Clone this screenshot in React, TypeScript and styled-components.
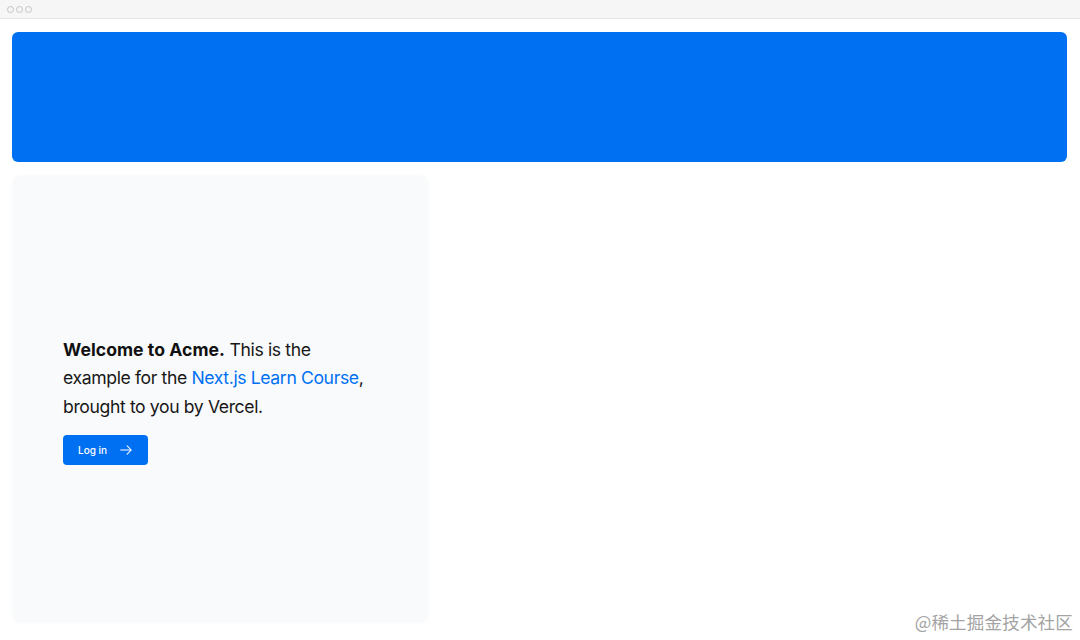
import React from 'react'
import styled, { createGlobalStyle } from 'styled-components'

const GlobalStyle = createGlobalStyle`
    body {
        margin: 0;
        background: #ffffff;
        font-family: Inter, "Liberation Sans", sans-serif;
    }
`

const Page = styled.div`
    position: relative;
    width: 1080px; height: 640px;
    overflow: hidden;
    background: #ffffff;
`

const Chrome = styled.div`
    display: flex;
    align-items: center;
    gap: 2px;
    box-sizing: border-box;
    height: 19px;
    padding-left: 7px;
    background: #f6f6f6;
    border-bottom: 1px solid #e4e4e4;
`

const Dot = styled.span`
    width: 5px; height: 5px;
    border-radius: 50%;
    border: 1px solid #c4c4c4;
`

const Main = styled.main`
    display: flex;
    flex-direction: column;
    gap: 14px;
    padding: 13px 13px 0 12px;
`

const Banner = styled.div`
    height: 130px;
    border-radius: 6px;
    background: #0070f3;
`

const Panel = styled.div`
    display: flex;
    flex-direction: column;
    justify-content: center;
    gap: 14px;
    box-sizing: border-box;
    width: 415px; height: 446px;
    margin-left: 1px;
    padding: 3px 40px 0 50px;
    border-radius: 8px;
    background: #f9fafb;
    box-shadow: 0 0 3px rgba(242, 244, 247, 0.9);
`

const Intro = styled.p`
    margin: 0;
    font-size: 17.6px;
    line-height: 28.5px;
    letter-spacing: -0.38px;
    color: #171717;
    strong {
        color: #111111;
        font-weight: 700;
        letter-spacing: 0.05px;
    }
    a {
        color: #0070f3;
        text-decoration: none;
    }
`

const LoginButton = styled.button`
    display: flex;
    align-items: center;
    gap: 12px;
    align-self: flex-start;
    height: 30px;
    padding: 0 15px 0 15px;
    border: none;
    border-radius: 4px;
    background: #0070f3;
    color: #ffffff;
    font-family: Inter, "Liberation Sans", sans-serif;
    font-size: 10px;
    font-weight: 500;
    cursor: pointer;
`

const Watermark = styled.div`
    position: absolute;
    right: 7px; bottom: 6px;
    font-family: "Noto Sans CJK SC", sans-serif;
    font-size: 17.5px;
    color: #a3a3a3;
    letter-spacing: 0.2px;
`

const App: React.FC = () => {
    return (
        <Page>
            <GlobalStyle />
            <Chrome>
                <Dot /><Dot /><Dot />
            </Chrome>
            <Main>
                <Banner />
                <Panel>
                    <Intro>
                        <strong>Welcome to Acme.</strong> This is the<br />
                        example for the <a href='#'>Next.js Learn Course</a>,<br />
                        brought to you by Vercel.
                    </Intro>
                    <LoginButton>
                        <span>Log in</span>
                        <svg width='14' height='14' viewBox='0 0 24 24' fill='none' stroke='currentColor'
                            strokeWidth='1.8' strokeLinecap='round' strokeLinejoin='round'>
                            <path d='M3 12h18M14 5l7 7-7 7' />
                        </svg>
                    </LoginButton>
                </Panel>
            </Main>
            <Watermark>@稀土掘金技术社区</Watermark>
        </Page>
    )
}

export default App
